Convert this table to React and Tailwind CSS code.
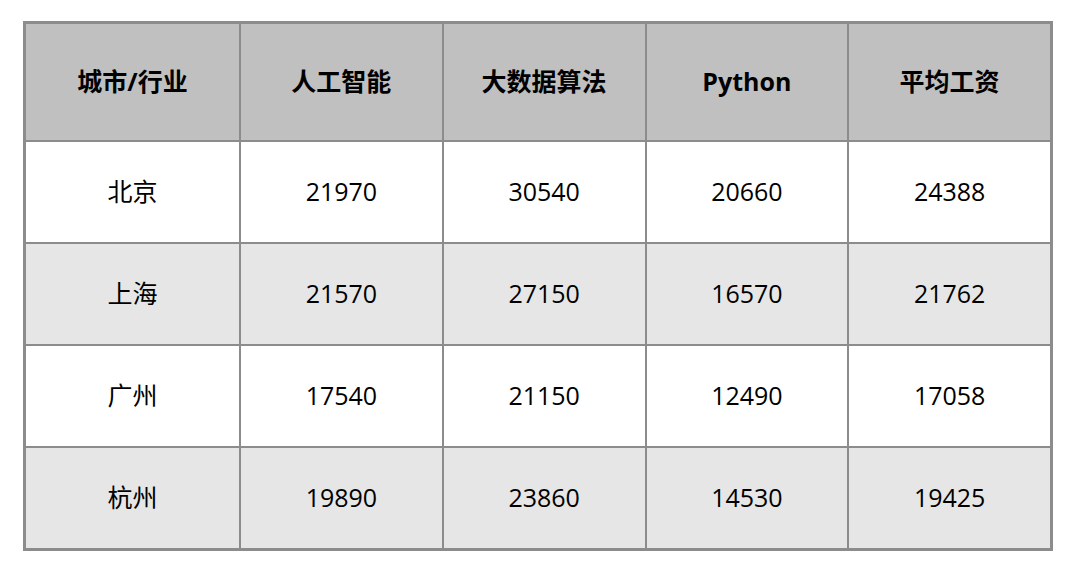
const header = ['城市/行业', '人工智能', '大数据算法', 'Python', '平均工资']

const rows = [
  ['北京', '21970', '30540', '20660', '24388'],
  ['上海', '21570', '27150', '16570', '21762'],
  ['广州', '17540', '21150', '12490', '17058'],
  ['杭州', '19890', '23860', '14530', '19425'],
]

const font = { fontFamily: '"Open Sans", "Noto Sans CJK SC", sans-serif' }

export default function App() {
  return (
    <div className="w-[1080px] h-[577px] bg-white pt-[21px] pl-[23px]" style={font}>
      <div className="w-[1030px] h-[530px] border-[3px] border-[#8c8c8c] bg-[#8c8c8c] grid grid-cols-[213px_1fr_1fr_1fr_1fr] grid-rows-[116px_1fr_1fr_1fr_1fr] gap-[2px]">
        {header.map((h) => (
          <div key={h} className="bg-[#c0c0c0] flex items-center justify-center text-[25px] font-bold text-black">
            {h}
          </div>
        ))}
        {rows.map((r, i) =>
          r.map((c, j) => (
            <div
              key={i + '-' + j}
              className={`flex items-center justify-center text-[25px] text-black ${i % 2 === 0 ? 'bg-white' : 'bg-[#e6e6e6]'}`}
            >
              {c}
            </div>
          ))
        )}
      </div>
    </div>
  )
}
